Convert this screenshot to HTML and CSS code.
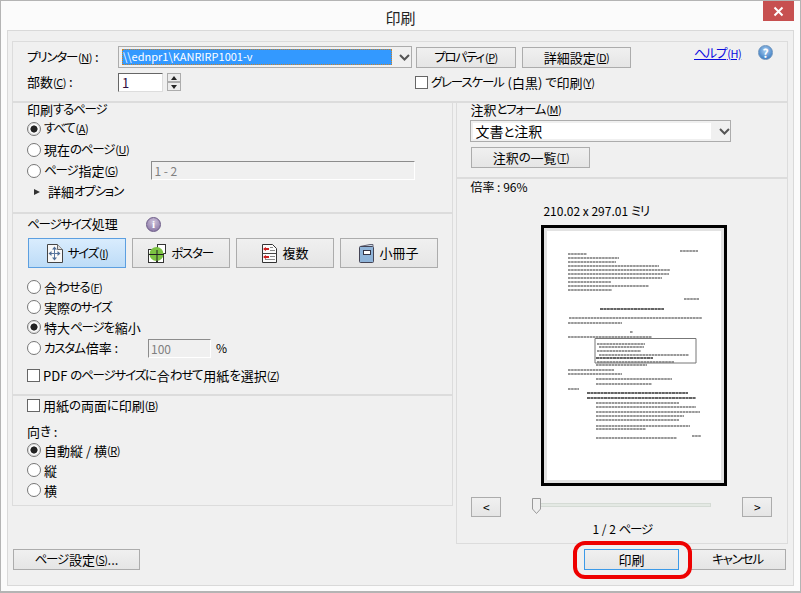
FILE: index.html
```html
<!DOCTYPE html>
<html lang="ja">
<head>
<meta charset="utf-8">
<title>印刷</title>
<link rel="stylesheet" href="styles.css">
</head>
<body>
<div class="window">
  <header class="titlebar">
    <span class="title">印刷</span>
    <span class="close"><svg width="11" height="11" viewBox="0 0 11 11"><path d="M1.500 1.500l8 8M9.500 1.500l-8 8" stroke="#fff" stroke-width="2" fill="none"/></svg></span>
  </header>
  <div class="panel">
    <section class="top">
      <div class="top-row1">
        <span class="top-label"><span class="k">プリンター</span><span class="ak">(<u>N</u>)</span> :</span>
        <div class="combo printer-combo">
          <span class="combo-selected">\\ednpr1\KANRIRP1001-v</span>
          <svg class="chev" width="11" height="7" viewBox="0 0 11 7"><path d="M1 1l4.500 4.500L10 1" stroke="#555" stroke-width="2" fill="none"/></svg>
        </div>
        <button class="btn btn-prop"><span class="k">プロパティ</span><span class="ak">(<u>P</u>)</span></button>
        <button class="btn btn-adv">詳細設定<span class="ak">(<u>D</u>)</span></button>
        <a class="help-link"><span class="k">ヘルプ</span><span class="ak">(H)</span></a>
        <span class="help-icon">?</span>
      </div>
      <div class="top-row2">
        <span class="top-label count-label">部数<span class="ak">(<u>C</u>)</span> :</span>
        <span class="copies">1</span>
        <span class="spin">
          <span class="spin-btn"><i class="tri-up"></i></span>
          <span class="spin-btn"><i class="tri-down"></i></span>
        </span>
        <span class="opt gray-opt"><i class="check"></i><span class="k">グレースケール</span> (白黒) <span class="k">で</span>印刷<span class="ak">(<u>Y</u>)</span></span>
      </div>
    </section>

    <div class="columns">
      <div class="col-left">
        <section class="sec sec-pages">
          <div class="sec-title">印刷<span class="k">するページ</span></div>
          <div class="opt"><i class="radio on"></i><span class="k">すべて</span><span class="ak">(<u>A</u>)</span></div>
          <div class="opt"><i class="radio"></i>現在<span class="k">のページ</span><span class="ak">(<u>U</u>)</span></div>
          <div class="opt">
            <i class="radio"></i><span class="k">ページ</span>指定<span class="ak">(<u>G</u>)</span>
            <span class="field range-field">1 - 2</span>
          </div>
          <div class="opt more"><i class="tri-right"></i>詳細<span class="k">オプション</span></div>
        </section>

        <section class="sec sec-size">
          <div class="size-head"><span class="size-title"><span class="k">ページサイズ</span>処理</span><span class="info-icon">i</span></div>
          <div class="mode-row">
            <button class="btn mode active">
              <svg width="17" height="19" viewBox="0 0 17 19"><path d="M1.500.5h10l5 5v13h-15z" fill="#f8f8f8" stroke="#444"/><path d="M11.500.5v5h5" fill="#ddd" stroke="#666"/><path d="M8.500 5v9M5 9.500h7" stroke="#5a77a0"/><path d="M8.500 2.500L6 5.500h5zM8.500 16.500L6 13.500h5zM2.500 9.500l3-2.500v5zM14.500 9.500l-3-2.500v5z" fill="#4f6d96"/></svg>
              <span class="mode-text"><span class="k">サイズ</span><span class="ak">(<u>I</u>)</span></span>
            </button>
            <button class="btn mode">
              <svg width="18" height="19" viewBox="0 0 18 19"><rect x=".5" y="5.500" width="8" height="5" fill="#fff" stroke="#333"/><rect x="9.500" y=".5" width="8" height="9" fill="#fff" stroke="#333"/><rect x=".5" y="10.500" width="8" height="8" fill="#fff" stroke="#333"/><rect x="9.500" y="10.500" width="6" height="8" fill="#fff" stroke="#333"/><circle cx="8.500" cy="10" r="7" fill="#7cc242"/><path d="M9 6v13M1 10.500h15" stroke="#222"/></svg>
              <span class="mode-text"><span class="k">ポスター</span></span>
            </button>
            <button class="btn mode">
              <svg width="16" height="19" viewBox="0 0 16 19"><path d="M1.500.5h10l4 4v14h-14z" fill="#fbfbfb" stroke="#333" stroke-linejoin="round"/><path d="M1.500 9.500h14" stroke="#444"/><path d="M9 3.500h3M9 6.500h5M9 12.500h5M4 15.500h10" stroke="#888"/><path d="M3 5h5M3 13h5" stroke="#c22" stroke-width="2"/><path d="M2 5l3-2v4zM2 13l3-2v4z" fill="#c22"/></svg>
              <span class="mode-text">複数</span>
            </button>
            <button class="btn mode">
              <svg width="15" height="19" viewBox="0 0 15 19"><path d="M1 2.500L11 .5h3v2" fill="#c9d6e3" stroke="#667"/><rect x=".5" y="2.500" width="14" height="16" rx="1" fill="#8fb4d9" stroke="#445"/><rect x="4.500" y="6.500" width="7" height="4" fill="#fff" stroke="#334"/></svg>
              <span class="mode-text">小冊子</span>
            </button>
          </div>
          <div class="opt first-fit"><i class="radio"></i>合<span class="k">わせる</span><span class="ak">(<u>F</u>)</span></div>
          <div class="opt"><i class="radio"></i>実際<span class="k">のサイズ</span></div>
          <div class="opt"><i class="radio on"></i>特大<span class="k">ページを</span>縮小</div>
          <div class="opt custom"><i class="radio"></i><span class="custom-label"><span class="k">カスタム</span>倍率 :</span><span class="field zoom-field">100</span><span class="pct">%</span></div>
          <div class="opt pdf-opt"><i class="check"></i>PDF <span class="k">のページサイズに</span>合<span class="k">わせて</span>用紙<span class="k">を</span>選択<span class="ak">(<u>Z</u>)</span></div>
        </section>

        <section class="sec sec-duplex">
          <div class="opt duplex"><i class="check"></i>用紙<span class="k">の</span>両面<span class="k">に</span>印刷<span class="ak">(<u>B</u>)</span></div>
          <div class="orient-title">向<span class="k">き</span> :</div>
          <div class="opt"><i class="radio on"></i>自動縦 / 横<span class="ak">(<u>R</u>)</span></div>
          <div class="opt"><i class="radio"></i>縦</div>
          <div class="opt"><i class="radio"></i>横</div>
        </section>
      </div>

      <div class="col-right">
        <section class="sec-notes">
          <div class="notes-title">注釈<span class="k">とフォーム</span><span class="ak">(<u>M</u>)</span></div>
          <div class="combo notes-combo">
            <span class="combo-white">文書<span class="k">と</span>注釈</span>
            <svg class="chev" width="11" height="7" viewBox="0 0 11 7"><path d="M1 1l4.500 4.500L10 1" stroke="#555" stroke-width="2" fill="none"/></svg>
          </div>
          <button class="btn btn-notes">注釈<span class="k">の</span>一覧<span class="ak">(<u>T</u>)</span></button>
        </section>
        <section class="sec-preview">
          <div class="scale">倍率 : 96%</div>
          <div class="paper-size">210.02 x 297.01 <span class="k">ミリ</span></div>
          <div class="sheet-frame">
            <svg class="sheet" width="174" height="249" viewBox="0 0 174 249">
              <defs><filter id="soft" x="-5%" y="-5%" width="110%" height="110%"><feGaussianBlur stdDeviation="0.45"/></filter></defs>
              <g filter="url(#soft)" fill="none">
                <path stroke="#777" stroke-width="1.300" stroke-dasharray="2.600 .5" d="M133 20H151M21 23H40M21 27H72M21 31H69M21 35H112M21 39H123M21 43H122M21 47H115M21 51H64M21 55H102M21 59H65M137 68H152M22 87H155M21 92H75M83 101H86M21 106H105M50 113H98M52 116H97M50 120H94M52 124H142M50 131H127M49 134H100M21 139H67M21 143H75M49 148H125M49 153H105M21 158H32M49 172H132M49 176H149M49 181H153M49 185H137M49 189H132M49 195H143M49 198H99M49 207H130M145 205H154"/>
                <path stroke="#333" stroke-width="1.400" stroke-dasharray="3 .4" d="M53 78H117M40 162H141M40 167H149M49 127H106"/>
                <path stroke="#777" d="M48 107.500H149V132H48Z"/>
              </g>
            </svg>
          </div>
          <div class="nav">
            <button class="btn nav-btn">&lt;</button>
            <div class="slider"><svg class="thumb" width="9" height="16" viewBox="0 0 9 16"><path d="M.5.500h8v10.500l-4 4.500-4-4.500z" fill="#f0f0f0" stroke="#999"/></svg></div>
            <button class="btn nav-btn">&gt;</button>
          </div>
          <div class="pager">1 / 2 <span class="k">ページ</span></div>
        </section>
      </div>
    </div>

    <footer class="actions">
      <button class="btn btn-setup"><span class="k">ページ</span>設定<span class="ak">(<u>S</u>)</span>...</button>
      <button class="btn btn-print">印刷</button>
      <button class="btn btn-cancel"><span class="k">キャンセル</span></button>
    </footer>
  </div>
  <div class="red-ring"></div>
</div>
</body>
</html>
```

FILE: styles.css
```css
* { box-sizing: border-box; }
html, body { margin: 0; padding: 0; }
body {
  width: 801px;
  height: 593px;
  overflow: hidden;
  background: #fff;
  font-family: "Noto Sans CJK JP", "Noto Sans", sans-serif;
  font-size: 13px;
  line-height: 1;
  color: #000;
  font-feature-settings: "palt";
}
u { text-decoration: underline; text-underline-offset: 1px; }
i { display: block; font-style: normal; }
button { font: inherit; color: inherit; font-feature-settings: inherit; padding: 0; }

.k { letter-spacing: -1.200px; font-size: 12.500px; padding-right: 1px; }
.ak { font-size: 11px; letter-spacing: -.5px; }

.window {
  position: relative;
  width: 801px;
  height: 593px;
  display: flex;
  flex-direction: column;
  background: #fbfbfb;
  border: 1px solid #b4b4b4;
  border-bottom-width: 2px;
}
.titlebar {
  position: relative;
  height: 29px;
  flex: none;
  display: flex;
  align-items: center;
  justify-content: center;
  padding-top: 4px;
}
.title { font-size: 15px; color: #222; }
.close {
  position: absolute;
  right: 6px;
  top: 0;
  width: 31px;
  height: 20px;
  background: #c75050;
  display: flex;
  align-items: center;
  justify-content: center;
}

.panel {
  flex: 1;
  margin: 0 6px 5px;
  background: #f0f0f0;
  border: 1px solid #d9d9d9;
  padding: 10px 5px 0 4px;
}

.btn {
  display: flex;
  align-items: center;
  justify-content: center;
  background: linear-gradient(#f0f0f0, #e5e5e5);
  border: 1px solid #acacac;
  border-radius: 0;
}

/* top */
.top {
  height: 62px;
  border: 1px solid #dcdcdc;
  border-bottom-width: 2px;
  padding: 4px 0 0 14px;
}
.top-row1, .top-row2 { display: flex; align-items: center; }
.top-row1 { height: 22px; }
.top-row2 { height: 20px; margin-top: 4px; }
.top-label { width: 91px; flex: none; }
.count-label { margin-top: -2px; }
.combo {
  display: flex;
  align-items: center;
  border: 1px solid #acacac;
  background: #f0f0f0;
}
.printer-combo { width: 294px; height: 22px; padding-left: 3px; }
.combo-selected {
  width: 270px;
  height: 16px;
  background: #3399ff;
  color: #fff;
  outline: 1px dotted #c9822a;
  outline-offset: -1px;
  padding: 2px 0 0 1px;
  font-size: 11px;
}
.chev { margin-left: 7px; }
.btn-prop { width: 100px; height: 21px; margin-left: 4px; }
.btn-adv { width: 109px; height: 21px; margin-left: 6px; }
.help-link {
  width: 46px;
  flex: none;
  margin-left: 63px;
  margin-bottom: 8px;
  color: #0a0ae0;
  text-decoration: underline;
  font-size: 12px;
  white-space: nowrap;
}
.help-icon {
  margin-left: 18px;
  margin-bottom: 9px;
  width: 15px;
  height: 15px;
  border-radius: 50%;
  background: radial-gradient(circle at 50% 35%, #a9cdf0, #3f7fc4 80%);
  border: 1px solid #6c93bd;
  color: #fff;
  font-weight: 700;
  font-size: 12px;
  display: flex;
  align-items: center;
  justify-content: center;
}
.copies {
  width: 45px;
  height: 19px;
  background: #fff;
  border: 1px solid #ddd;
  border-top-color: #666;
  border-left-color: #666;
  padding: 2px 0 0 3px;
  color: #301040;
}
.spin { margin-left: 4px; display: flex; flex-direction: column; }
.spin-btn {
  width: 14px;
  height: 9px;
  display: flex;
  align-items: center;
  justify-content: center;
  background: #ececec;
  border: 1px solid #acacac;
}
.tri-up { border: 3.500px solid transparent; border-top: 0; border-bottom: 4px solid #222; }
.tri-down { border: 3.500px solid transparent; border-bottom: 0; border-top: 4px solid #222; }
.gray-opt { margin-left: 234px; height: 20px; white-space: pre; }

/* options */
.opt { display: flex; align-items: center; height: 21px; white-space: pre; }
.radio {
  width: 14px;
  height: 14px;
  flex: none;
  margin-right: 3px;
  border-radius: 50%;
  background: #fff;
  border: 1px solid #777;
}
.radio.on { background: radial-gradient(circle, #222 0 3.200px, #fff 3.900px); box-shadow: inset 0 0 0 1px #ddd; }
.check {
  width: 13px;
  height: 13px;
  flex: none;
  margin-right: 3px;
  background: #fff;
  border: 1px solid #666;
}

/* columns */
.columns { display: flex; gap: 3px; }
.col-left {
  width: 442px;
  height: 403px;
  border: 1px solid #dcdcdc;
  border-top: 0;
}
.col-right {
  width: 332px;
  height: 441px;
  border: 1px solid #dcdcdc;
  border-top: 0;
}
.sec { padding-left: 14px; }
.sec-pages { height: 111px; border-bottom: 2px solid #dcdcdc; }
.sec-title { height: 13px; margin-bottom: 2px; display: flex; align-items: center; white-space: pre; }
.field {
  display: block;
  border: 1px solid #fff;
  border-top-color: #8c8c8c;
  border-left-color: #8c8c8c;
  color: #808080;
  font-size: 12px;
  padding: 3px 0 0 2px;
}
.range-field { margin-left: auto; margin-right: 37px; width: 264px; height: 19px; }
.more { padding-left: 7px; }
.tri-right { border: 3.500px solid transparent; border-right: 0; border-left: 6px solid #333; margin-right: 8px; }

.sec-size { height: 182px; border-bottom: 2px solid #dcdcdc; }
.size-head { height: 21px; display: flex; align-items: center; white-space: pre; }
.size-title { width: 119px; flex: none; margin-top: -2px; }
.info-icon {
  width: 15px;
  height: 15px;
  border-radius: 50%;
  background: radial-gradient(circle at 50% 30%, #cfc4dc, #8b78a6 85%);
  border: 1px solid #6b5a86;
  color: #fff;
  font-weight: 700;
  font-size: 11px;
  font-family: "Liberation Serif", serif;
  display: flex;
  align-items: center;
  justify-content: center;
}
.mode-row { display: flex; gap: 6px; margin: 3px 0 0 1px; }
.mode { width: 98px; height: 30px; gap: 5px; white-space: pre; }
.mode-text { padding-bottom: 1px; }
.mode.active { background: linear-gradient(#d9ecfd, #bddcf7); border-color: #5c9fe0; }
.first-fit { margin-top: 9px; }
.sec-size .opt { height: 20px; }
.sec-size .custom { height: 22px; }
.sec-size .pdf-opt { height: 22px; margin-top: 5px; }
.custom-label { width: 104px; flex: none; }
.zoom-field { width: 63px; height: 19px; }
.pct { margin-left: 5px; font-size: 12px; }

.orient-title { height: 18px; margin-top: 8px; display: flex; align-items: center; white-space: pre; }
.sec-duplex .opt { height: 20px; }
.sec-duplex .duplex { height: 18px; }

/* right */
.sec-notes { height: 76px; border-bottom: 2px solid #dcdcdc; padding-left: 13px; }
.notes-title { height: 13px; margin-bottom: 1px; display: flex; align-items: center; white-space: pre; }
.notes-combo { width: 261px; height: 22px; margin-top: 4px; padding-left: 2px; }
.combo-white { width: 239px; height: 16px; background: #fff; padding: 1px 0 0 2px; font-size: 14px; }
.notes-combo .chev { margin-left: 8px; }
.btn-notes { width: 119px; height: 21px; margin: 5px 0 0 1px; white-space: pre; }
.sec-preview { padding-left: 13px; }
.scale { height: 16px; display: flex; align-items: center; font-size: 12px; }
.paper-size { margin: 10px 0 0 73px; height: 14px; font-size: 12px; }
.sheet-frame {
  width: 186px;
  height: 261px;
  margin: 6px 0 0 71px;
  border: 3px solid #000;
  background: #e2e2e2;
  padding: 3px;
  display: flex;
}
.sheet { background: #fff; display: block; }
.nav { display: flex; align-items: center; margin: 11px 0 0 1px; width: 301px; height: 20px; }
.nav-btn { width: 30px; height: 20px; flex: none; font-size: 12px; }
.slider {
  position: relative;
  width: 179px;
  height: 4px;
  margin: -4px 31px 0;
  background: #e4e9e4;
  border: 1px solid #d5dbd5;
}
.thumb { position: absolute; left: -1px; top: -6px; }
.pager { margin: 4px 0 0 122px; height: 16px; display: flex; align-items: center; font-size: 12px; white-space: pre; }

/* bottom */
.actions { display: flex; margin: 5px 0 0 1px; }
.btn-setup { width: 127px; height: 21px; }
.btn-print { width: 95px; height: 21px; margin-left: 444px; border-color: #3c9ae8; }
.btn-cancel { width: 96px; height: 21px; margin-left: 11px; }

.red-ring {
  position: absolute;
  left: 572px;
  top: 540px;
  width: 119px;
  height: 38px;
  border: 4px solid #ee0000;
  border-radius: 12px;
  pointer-events: none;
}
```
